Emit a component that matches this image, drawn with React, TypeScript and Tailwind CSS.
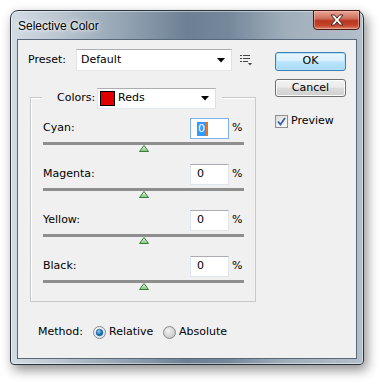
import React from 'react'

const ui = { fontFamily: '"DejaVu Sans", Tahoma, sans-serif' }

function Combo({ width, children }: { width: string; children: React.ReactNode }) {
  return (
    <div
      className={`${width} h-[22px] flex items-center bg-white border border-[#abadb3] border-l-[#e2e3ea] border-r-[#dbdfe6] border-b-[#e3e9ef]`}
    >
      <div className="flex-1 flex items-center min-w-0">{children}</div>
      <svg width="8" height="5" viewBox="0 0 8 5" className="mr-[6px]">
        <path d="M0 0h8L4 4.5z" fill="#000" />
      </svg>
    </div>
  )
}

function Thumb() {
  return (
    <svg width="10" height="7" viewBox="0 0 10 7">
      <defs>
        <linearGradient id="tg" x1="0" y1="0" x2="0" y2="1">
          <stop offset="0" stopColor="#f4fff4" />
          <stop offset="1" stopColor="#7cc27c" />
        </linearGradient>
      </defs>
      <path d="M5 0.5 L9.5 6.5 H0.5 Z" fill="url(#tg)" stroke="#3b7d3b" strokeWidth="1" strokeLinejoin="round" />
    </svg>
  )
}

function SliderRow({ label, focused }: { label: string; focused?: boolean }) {
  return (
    <div className="flex flex-col w-[201px]">
      <div className="flex items-center h-[21px]">
        <span className="flex-1 text-[11px] text-black">{label}</span>
        <div
          className={`w-[39px] h-[21px] bg-white border flex items-center pl-[6px] ${
            focused ? 'border-[#7eb4ea]' : 'border-[#dfe5ec] border-t-[#abadb3]'
          }`}
        >
          {focused ? (
            <span className="flex items-center">
              <span className="bg-[#3399ff] text-white text-[11px] leading-[14px] px-[1px]">0</span>
              <span className="w-[2px] h-[14px] bg-[#e8751a]" />
            </span>
          ) : (
            <span className="text-[11px] text-black">0</span>
          )}
        </div>
        <span className="ml-[3px] w-[12px] text-[11px] text-black">%</span>
      </div>
      <div className="mt-[3px] h-[3px] bg-[#8e8e8e]" />
      <div className="flex justify-center">
        <Thumb />
      </div>
    </div>
  )
}

function Radio({ checked }: { checked?: boolean }) {
  return (
    <svg width="13" height="13" viewBox="0 0 13 13">
      <defs>
        <radialGradient id={checked ? 'rb' : 'rg'} cx="0.4" cy="0.35" r="0.7">
          <stop offset="0" stopColor={checked ? '#f6fafd' : '#f2f2f2'} />
          <stop offset="1" stopColor={checked ? '#d4e3ee' : '#c4c4c4'} />
        </radialGradient>
        <radialGradient id="dot" cx="0.4" cy="0.35" r="0.7">
          <stop offset="0" stopColor="#8ed1f5" />
          <stop offset="0.6" stopColor="#1f78b7" />
          <stop offset="1" stopColor="#0c4f86" />
        </radialGradient>
      </defs>
      <circle cx="6.5" cy="6.5" r="6" fill={`url(#${checked ? 'rb' : 'rg'})`} stroke="#8a8a8a" />
      {checked && <circle cx="6.5" cy="6.5" r="3.3" fill="url(#dot)" stroke="#11507f" strokeWidth="0.6" />}
    </svg>
  )
}

export default function App() {
  return (
    <div className="w-[383px] h-[384px] bg-white pt-[10px] pl-[10px]" style={ui}>
      {/* Window frame */}
      <div
        className="relative w-[354px] h-[355px] rounded-t-[8px] rounded-b-[4px] border border-[#27323d] flex flex-col bg-[linear-gradient(90deg,#d3dce4_0%,#b9c5d0_14%,#8fa0b0_34%,#6d8093_50%,#75889b_62%,#a0aebb_78%,#b3bfca_100%)] shadow-[3px_5px_12px_rgba(0,0,0,0.45),inset_0_0_0_1px_rgba(255,255,255,0.45)]"
      >
        {/* Title bar */}
        <div className="h-[28px] flex items-start justify-between">
          <span
            className="pl-[7px] pt-[6px] text-[12px] text-black"
            style={{ fontFamily: '"Liberation Sans", Arial, sans-serif', textShadow: '0 0 6px #fff, 0 0 3px #fff' }}
          >
            Selective Color
          </span>
          <div className="mr-[3px] -mt-[1px] w-[47px] h-[20px] rounded-b-[4px] border border-[#4b1a12] bg-[linear-gradient(180deg,#e8a596_0%,#d2735f_40%,#b7361f_55%,#c4452b_80%,#d9846a_100%)] shadow-[inset_0_0_0_1px_rgba(255,200,190,0.5)] flex items-center justify-center">
            <svg width="16" height="12" viewBox="0 0 16 12">
              <path
                d="M2 1h3.5L8 4.2 10.5 1H14L9.8 6 14 11h-3.5L8 7.8 5.5 11H2l4.2-5z"
                fill="#fff"
                stroke="#4a2a25"
                strokeWidth="1"
                strokeLinejoin="round"
              />
            </svg>
          </div>
        </div>

        {/* Client area */}
        <div className="ml-[6px] w-[340px] h-[320px] border border-[#56687a] bg-[#f0f0f0] flex">
          {/* Left column */}
          <div className="w-[257px] pl-[10px] pt-[9px] flex flex-col">
            <div className="h-[22px] flex items-center">
              <span className="w-[48px] text-[11px] text-black">Preset:</span>
              <Combo width="w-[156px]">
                <span className="pl-[4px] text-[11px] text-black">Default</span>
              </Combo>
              <svg width="12" height="11" viewBox="0 0 12 11" className="ml-[8px]">
                <g fill="#444">
                  <rect x="0" y="0" width="2" height="1" />
                  <rect x="3" y="0" width="7" height="1" />
                  <rect x="0" y="3" width="2" height="1" />
                  <rect x="3" y="3" width="7" height="1" />
                  <rect x="0" y="6" width="2" height="1" />
                  <rect x="3" y="6" width="5" height="1" />
                  <path d="M8 8h4l-2 2.5z" />
                </g>
              </svg>
            </div>

            {/* Group box */}
            <div className="mt-[26px] ml-[2px] w-[226px] h-[205px] border border-[#c9c9c9] shadow-[inset_1px_1px_0_#fff] flex flex-col">
              <div className="-mt-[10px] ml-[11px] self-start flex items-center bg-[#f0f0f0] pl-[15px] pr-[6px] h-[21px]">
                <span className="w-[40px] text-[11px] text-black">Colors:</span>
                <div className="w-[119px] h-[21px] flex items-center bg-white border border-[#abadb3] border-l-[#e2e3ea] border-r-[#dbdfe6] border-b-[#e3e9ef]">
                  <span className="ml-[2px] w-[15px] h-[15px] bg-[#e00000] border border-black" />
                  <span className="flex-1 pl-[3px] text-[11px] text-black">Reds</span>
                  <svg width="8" height="5" viewBox="0 0 8 5" className="mr-[6px]">
                    <path d="M0 0h8L4 4.5z" fill="#000" />
                  </svg>
                </div>
              </div>

              <div className="mt-[9px] ml-[12px] flex flex-col gap-[12px]">
                <SliderRow label="Cyan:" focused />
                <SliderRow label="Magenta:" />
                <SliderRow label="Yellow:" />
                <SliderRow label="Black:" />
              </div>
            </div>

            {/* Method */}
            <div className="mt-[22px] ml-[10px] h-[16px] flex items-center text-[11px] text-black">
              <span className="w-[55px]">Method:</span>
              <Radio checked />
              <span className="ml-[3px] w-[54px]">Relative</span>
              <Radio />
              <span className="ml-[3px]">Absolute</span>
            </div>
          </div>

          {/* Right column */}
          <div className="pt-[12px] w-[71px] flex flex-col">
            <div className="h-[19px] rounded-[3px] border border-[#3c7fb1] bg-[linear-gradient(180deg,#eaf6fd_0%,#d9f0fc_45%,#bee6fd_50%,#a7d9f5_100%)] shadow-[inset_0_0_0_1px_#b0e2f9] flex items-center justify-center text-[11px] text-black">
              OK
            </div>
            <div className="mt-[8px] h-[18px] rounded-[3px] border border-[#707070] bg-[linear-gradient(180deg,#f2f2f2_0%,#ebebeb_45%,#dddddd_50%,#cfcfcf_100%)] shadow-[inset_0_0_0_1px_#fcfcfc] flex items-center justify-center text-[11px] text-black">
              Cancel
            </div>
            <div className="mt-[16px] flex items-center">
              <div className="w-[13px] h-[13px] border border-[#8f8f8f] bg-[linear-gradient(135deg,#dcdcdc,#fbfbfb)] flex items-center justify-center">
                <svg width="9" height="9" viewBox="0 0 9 9">
                  <path d="M1 4.5 L3.5 7.5 L8 1" fill="none" stroke="#3a5fae" strokeWidth="1.8" />
                </svg>
              </div>
              <span className="ml-[3px] text-[11px] text-black">Preview</span>
            </div>
          </div>
        </div>
      </div>
    </div>
  )
}
